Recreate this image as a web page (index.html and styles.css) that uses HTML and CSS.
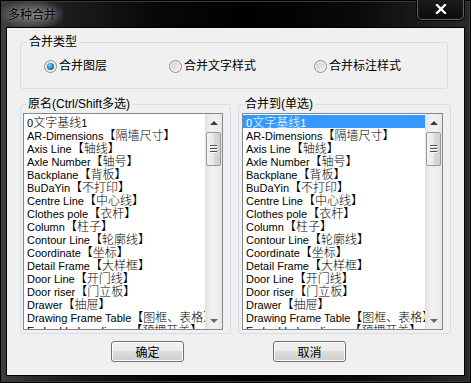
FILE: index.html
```html
<!DOCTYPE html>
<html lang="zh-CN">
<head>
    <meta charset="UTF-8">
    <title>多种合并</title>
    <link rel="stylesheet" href="styles.css">
</head>
<body>
<div class="window">

    <!-- Title bar -->
    <div class="titlebar">
        <span class="title">多种合并</span>
        <div class="close">
            <svg width="12" height="10" viewBox="0 0 12 10">
                <path d="M2 1 L10 9 M10 1 L2 9" stroke="#000" stroke-width="4" stroke-linecap="square" opacity="0.6"/>
                <path d="M2 1 L10 9 M10 1 L2 9" stroke="#fff" stroke-width="2.4" stroke-linecap="square"/>
            </svg>
        </div>
    </div>

    <div class="client">

        <!-- Merge type -->
        <fieldset class="group type-group">
            <legend>合并类型</legend>
            <div class="radios">
                <label class="radio first"><span class="rb checked"></span>合并图层</label>
                <label class="radio second"><span class="rb"></span>合并文字样式</label>
                <label class="radio"><span class="rb"></span>合并标注样式</label>
            </div>
        </fieldset>

        <!-- Lists -->
        <div class="lists">
            <fieldset class="group list-group source">
                <legend>原名(Ctrl/Shift多选)</legend>
                <div class="listbox">
                    <ul class="items">
                        <li>0<span class="zh">文字基线</span>1</li>
                        <li>AR-Dimensions<span class="zh">【隔墙尺寸】</span></li>
                        <li>Axis Line<span class="zh">【轴线】</span></li>
                        <li>Axle Number<span class="zh">【轴号】</span></li>
                        <li>Backplane<span class="zh">【背板】</span></li>
                        <li>BuDaYin<span class="zh">【不打印】</span></li>
                        <li>Centre Line<span class="zh">【中心线】</span></li>
                        <li>Clothes pole<span class="zh">【衣杆】</span></li>
                        <li>Column<span class="zh">【柱子】</span></li>
                        <li>Contour Line<span class="zh">【轮廓线】</span></li>
                        <li>Coordinate<span class="zh">【坐标】</span></li>
                        <li>Detail Frame<span class="zh">【大样框】</span></li>
                        <li>Door Line<span class="zh">【开门线】</span></li>
                        <li>Door riser<span class="zh">【门立板】</span></li>
                        <li>Drawer<span class="zh">【抽屉】</span></li>
                        <li>Drawing Frame Table<span class="zh">【图框、表格】</span></li>
                        <li>Embedded appliance<span class="zh">【预埋开关】</span></li>
                    </ul>
                    <div class="scrollbar">
                        <div class="sb-btn"><span class="arrow-up"></span></div>
                        <div class="thumb"><span class="grip"></span></div>
                        <div class="sb-track"></div>
                        <div class="sb-btn"><span class="arrow-down"></span></div>
                    </div>
                </div>
            </fieldset>

            <fieldset class="group list-group target">
                <legend>合并到(单选)</legend>
                <div class="listbox">
                    <ul class="items">
                        <li class="selected">0<span class="zh">文字基线</span>1</li>
                        <li>AR-Dimensions<span class="zh">【隔墙尺寸】</span></li>
                        <li>Axis Line<span class="zh">【轴线】</span></li>
                        <li>Axle Number<span class="zh">【轴号】</span></li>
                        <li>Backplane<span class="zh">【背板】</span></li>
                        <li>BuDaYin<span class="zh">【不打印】</span></li>
                        <li>Centre Line<span class="zh">【中心线】</span></li>
                        <li>Clothes pole<span class="zh">【衣杆】</span></li>
                        <li>Column<span class="zh">【柱子】</span></li>
                        <li>Contour Line<span class="zh">【轮廓线】</span></li>
                        <li>Coordinate<span class="zh">【坐标】</span></li>
                        <li>Detail Frame<span class="zh">【大样框】</span></li>
                        <li>Door Line<span class="zh">【开门线】</span></li>
                        <li>Door riser<span class="zh">【门立板】</span></li>
                        <li>Drawer<span class="zh">【抽屉】</span></li>
                        <li>Drawing Frame Table<span class="zh">【图框、表格】</span></li>
                        <li>Embedded appliance<span class="zh">【预埋开关】</span></li>
                    </ul>
                    <div class="scrollbar">
                        <div class="sb-btn"><span class="arrow-up"></span></div>
                        <div class="thumb"><span class="grip"></span></div>
                        <div class="sb-track"></div>
                        <div class="sb-btn"><span class="arrow-down"></span></div>
                    </div>
                </div>
            </fieldset>
        </div>

        <!-- Buttons -->
        <div class="buttons">
            <button class="btn">确定</button>
            <button class="btn">取消</button>
        </div>
    </div>
</div>
</body>
</html>
```

FILE: styles.css
```css
* {
    margin: 0;
    padding: 0;
    box-sizing: border-box;
}

body {
    width: 471px;
    height: 383px;
    overflow: hidden;
    background: #000;
    font-family: "Liberation Sans", "Noto Sans CJK SC", sans-serif;
}

/* Window frame */
.window {
    width: 471px;
    height: 383px;
    display: flex;
    flex-direction: column;
    background: linear-gradient(90deg, #3e3e3e 0, #1e1e1e 60px, #070707 160px, #000 250px, #0a0a0a 360px, #2a2a2a 471px);
    box-shadow: inset 0 0 0 1px #000, inset 0 0 0 2px #3a3a3a;
}

/* Title bar */
.titlebar {
    height: 28px;
    flex-shrink: 0;
    display: flex;
    align-items: flex-start;
}

.title {
    margin: 1px 0 0 1px;
    padding: 6px 7px 7px 7px;
    font-family: "Noto Sans CJK SC", sans-serif;
    font-size: 12px;
    line-height: 14px;
    color: #000;
    border-radius: 10px;
    background: radial-gradient(ellipse at center, rgba(150, 150, 150, 0.75) 0, rgba(110, 110, 110, 0.45) 55%, rgba(60, 60, 60, 0) 80%);
    text-shadow: 0 0 3px rgba(210, 210, 210, 0.6);
}

.close {
    margin: -1px 7px 0 auto;
    width: 47px;
    height: 21px;
    border: 1px solid #5e5e5e;
    border-top: none;
    border-radius: 0 0 5px 5px;
    background: linear-gradient(#1c1c1c, #0b0b0b);
    box-shadow: inset 0 0 0 1px #161616, 0 0 0 1px #000;
    display: flex;
    align-items: center;
    justify-content: center;
}

/* Client area */
.client {
    flex: 1;
    margin: 0 7px 8px 7px;
    padding-top: 7px;
    background: #f0f0f0;
    box-shadow: 0 0 0 1px #000;
}

/* Group boxes */
.group {
    border: 1px solid #d5dfe5;
    border-radius: 3px;
    min-width: 0;
}

.group legend {
    padding: 0 2px;
    font-size: 12px;
    line-height: 14px;
    color: #000;
}

.type-group {
    margin-left: 13px;
    width: 428px;
    padding: 0 0 15px 6px;
}

.radios {
    display: flex;
    height: 14px;
    margin: 10px 0 0 17px;
}

.radio {
    display: flex;
    align-items: center;
    gap: 2px;
    font-size: 12px;
    line-height: 14px;
    color: #000;
}

.radio.first {
    width: 125px;
}

.radio.second {
    width: 145px;
}

.rb {
    position: relative;
    width: 13px;
    height: 13px;
    border-radius: 50%;
    border: 1px solid #8e8f8f;
    background: linear-gradient(135deg, #cdcdcd, #f6f6f6);
    box-shadow: inset 0 0 0 1px #f4f4f4;
}

.rb.checked::after {
    content: "";
    position: absolute;
    left: 2px;
    top: 2px;
    width: 7px;
    height: 7px;
    border-radius: 50%;
    background: radial-gradient(circle at 40% 35%, #9fdcff 0, #2a86d0 45%, #0c4a86 100%);
}

/* List groups */
.lists {
    display: flex;
    gap: 7px;
    margin: 8px 0 0 13px;
}

.list-group {
    width: 211px;
    padding: 2px 7px 3px 2px;
}

.list-group.source legend {
    margin-left: 3px;
}

.list-group.target {
    width: 213px;
    padding-left: 3px;
}

.list-group.target legend {
    margin-left: 1px;
}

.listbox {
    display: flex;
    height: 217px;
    border: 1px solid #828790;
    background: #fff;
}

.items {
    flex: 1;
    min-width: 0;
    list-style: none;
    padding-top: 1px;
    overflow: hidden;
}

.items li {
    height: 13px;
    line-height: 13px;
    padding-left: 3px;
    font-size: 11px;
    color: #000;
    white-space: nowrap;
}

.items li.selected {
    background: #3399ff;
    color: #fff;
}

.zh {
    font-family: "Noto Sans CJK SC", sans-serif;
    font-size: 12px;
    font-weight: 300;
}

/* Scrollbar */
.scrollbar {
    width: 17px;
    flex-shrink: 0;
    display: flex;
    flex-direction: column;
    background: linear-gradient(90deg, #e2e2e2, #f0f0f0 35%, #f0f0f0 65%, #e6e6e6);
}

.sb-btn {
    height: 17px;
    flex-shrink: 0;
    display: flex;
    align-items: center;
    justify-content: center;
}

.arrow-up {
    width: 0;
    height: 0;
    border-left: 4px solid transparent;
    border-right: 4px solid transparent;
    border-bottom: 4px solid #3a3a3a;
}

.arrow-down {
    width: 0;
    height: 0;
    border-left: 4px solid transparent;
    border-right: 4px solid transparent;
    border-top: 4px solid #6a6a6a;
}

.thumb {
    height: 34px;
    margin: 1px 1px 0 1px;
    border: 1px solid #9a9a9a;
    border-radius: 2px;
    background: linear-gradient(90deg, #f3f3f3, #e8e8e8 50%, #d9d9d9 51%, #d0d0d0);
    display: flex;
    align-items: center;
    justify-content: center;
}

.grip {
    width: 7px;
    height: 8px;
    background: repeating-linear-gradient(#4f4f4f 0 1px, #fdfdfd 1px 2px, transparent 2px 3px);
}

.sb-track {
    flex: 1;
}

/* Buttons */
.buttons {
    display: flex;
    gap: 89px;
    margin: 7px 0 0 104px;
}

.btn {
    width: 73px;
    height: 21px;
    border: 1px solid #707070;
    border-radius: 3px;
    background: linear-gradient(#f2f2f2 0, #ebebeb 50%, #dddddd 50%, #cfcfcf 100%);
    box-shadow: inset 0 0 0 1px #fbfbfb;
    font-family: "Noto Sans CJK SC", sans-serif;
    font-size: 12px;
    line-height: 14px;
    color: #000;
}
```
